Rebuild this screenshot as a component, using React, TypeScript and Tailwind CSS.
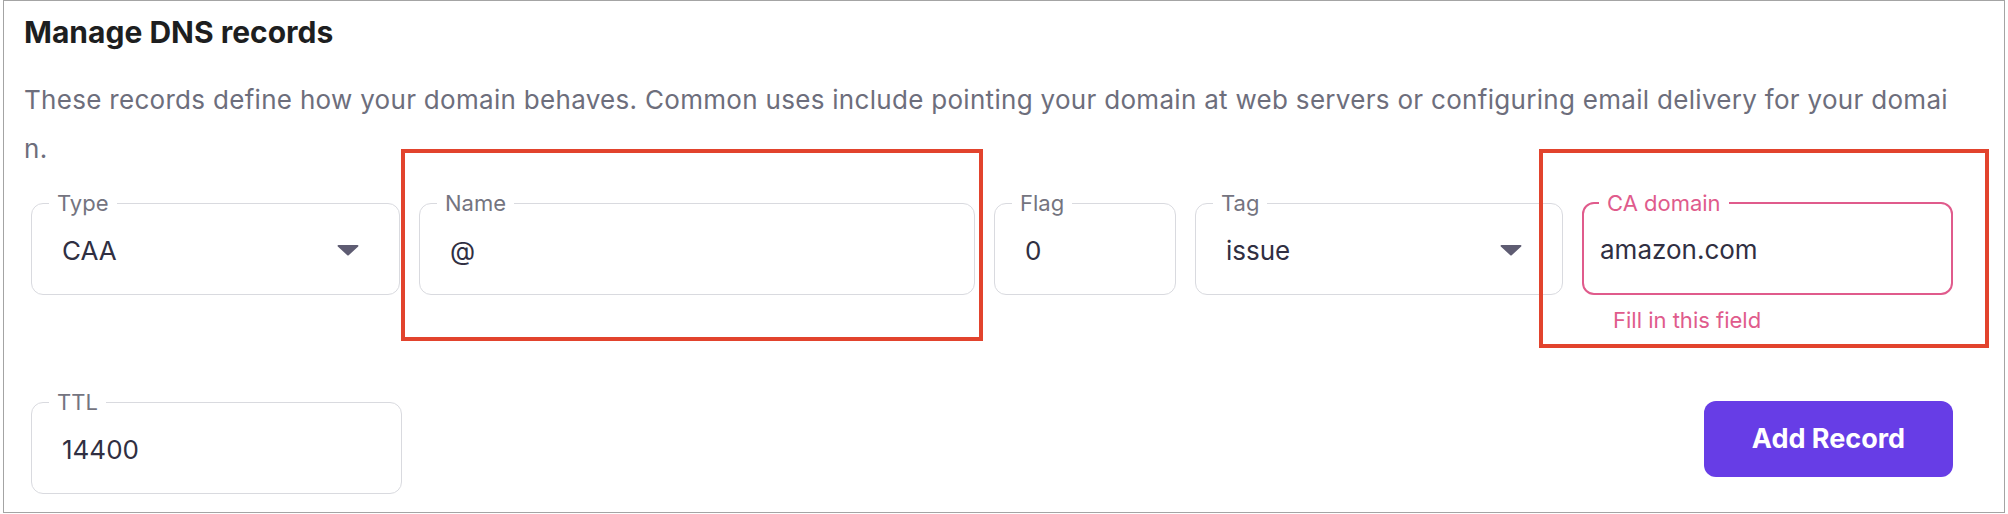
import React from "react";

function Caret() {
  return (
    <svg width="22" height="12" viewBox="0 0 22 12" className="shrink-0">
      <path d="M1.5 1h19c.9 0 1.3 1 .7 1.6l-9.5 8.6c-.4.4-1 .4-1.4 0L.8 2.6C.2 2 .6 1 1.5 1z" fill="#5e5c72" />
    </svg>
  );
}

function Field({
  label,
  value,
  className,
  select,
}: {
  label: string;
  value: string;
  className: string;
  select?: boolean;
}) {
  return (
    <div className={className}>
      <fieldset className="rounded-[12px] border border-[#d9dadf]">
        <legend className="ml-[17px] px-[8px] text-[22px] leading-[22px] text-[#74747f]">{label}</legend>
        {/* legend pushes content down, so pb keeps the value centred in the outline */}
        <div className="flex h-[80px] items-center justify-between pb-[8px] pl-[30px] pr-[40px] text-[26px] text-[#302f42]">
          <span>{value}</span>
          {select && <Caret />}
        </div>
      </fieldset>
    </div>
  );
}

export default function App() {
  return (
    <div className="min-h-[514px] bg-white font-['Inter','Noto_Sans',sans-serif]">
      <div className="relative ml-[3px] h-[513px] w-[2002px] border border-[#a4a4a4] pl-[20px] pt-[13px]">
        <h1 className="text-[30px] leading-[36px] font-bold text-[#1d1e20]">Manage DNS records</h1>
        <p className="mt-[25px] text-[26px] leading-[49px] tracking-[0.3px] text-[#6d6e7c]">
          These records define how your domain behaves. Common uses include pointing your domain at web servers or configuring email delivery for your domai
          <br />
          n.
        </p>

        <div className="ml-[7px] w-[1922px]">
          <div className="mt-[19px] flex items-start gap-[19px]">
            <Field label="Type" value="CAA" select className="w-[369px]" />
            <Field label="Name" value="@" className="w-[556px]" />
            <Field label="Flag" value="0" className="w-[182px]" />
            <Field label="Tag" value="issue" select className="w-[368px]" />
            <div className="w-[371px]">
              <fieldset className="rounded-[12px] border-2 border-[#e05b8c]">
                <legend className="ml-[15px] px-[8px] text-[22px] leading-[22px] text-[#e05b8c]">CA domain</legend>
                <div className="flex h-[79px] items-center pb-[8px] pl-[16px] text-[26px] text-[#302f42]">amazon.com</div>
              </fieldset>
              <p className="mt-[13px] pl-[31px] text-[22px] leading-[24px] text-[#e05b8c]">Fill in this field</p>
            </div>
          </div>

          <div className="mt-[59px] flex items-start justify-between">
            <Field label="TTL" value="14400" className="w-[371px]" />
            <button className="mt-[10px] h-[76px] w-[249px] rounded-[12px] bg-[#673de6] text-[27px] font-bold text-white">
              Add Record
            </button>
          </div>
        </div>

        {/* annotation boxes */}
        <div className="pointer-events-none absolute left-[397px] top-[148px] h-[192px] w-[582px] border-4 border-[#e2432d]" />
        <div className="pointer-events-none absolute left-[1535px] top-[148px] h-[199px] w-[450px] border-4 border-[#e2432d]" />
      </div>
    </div>
  );
}
